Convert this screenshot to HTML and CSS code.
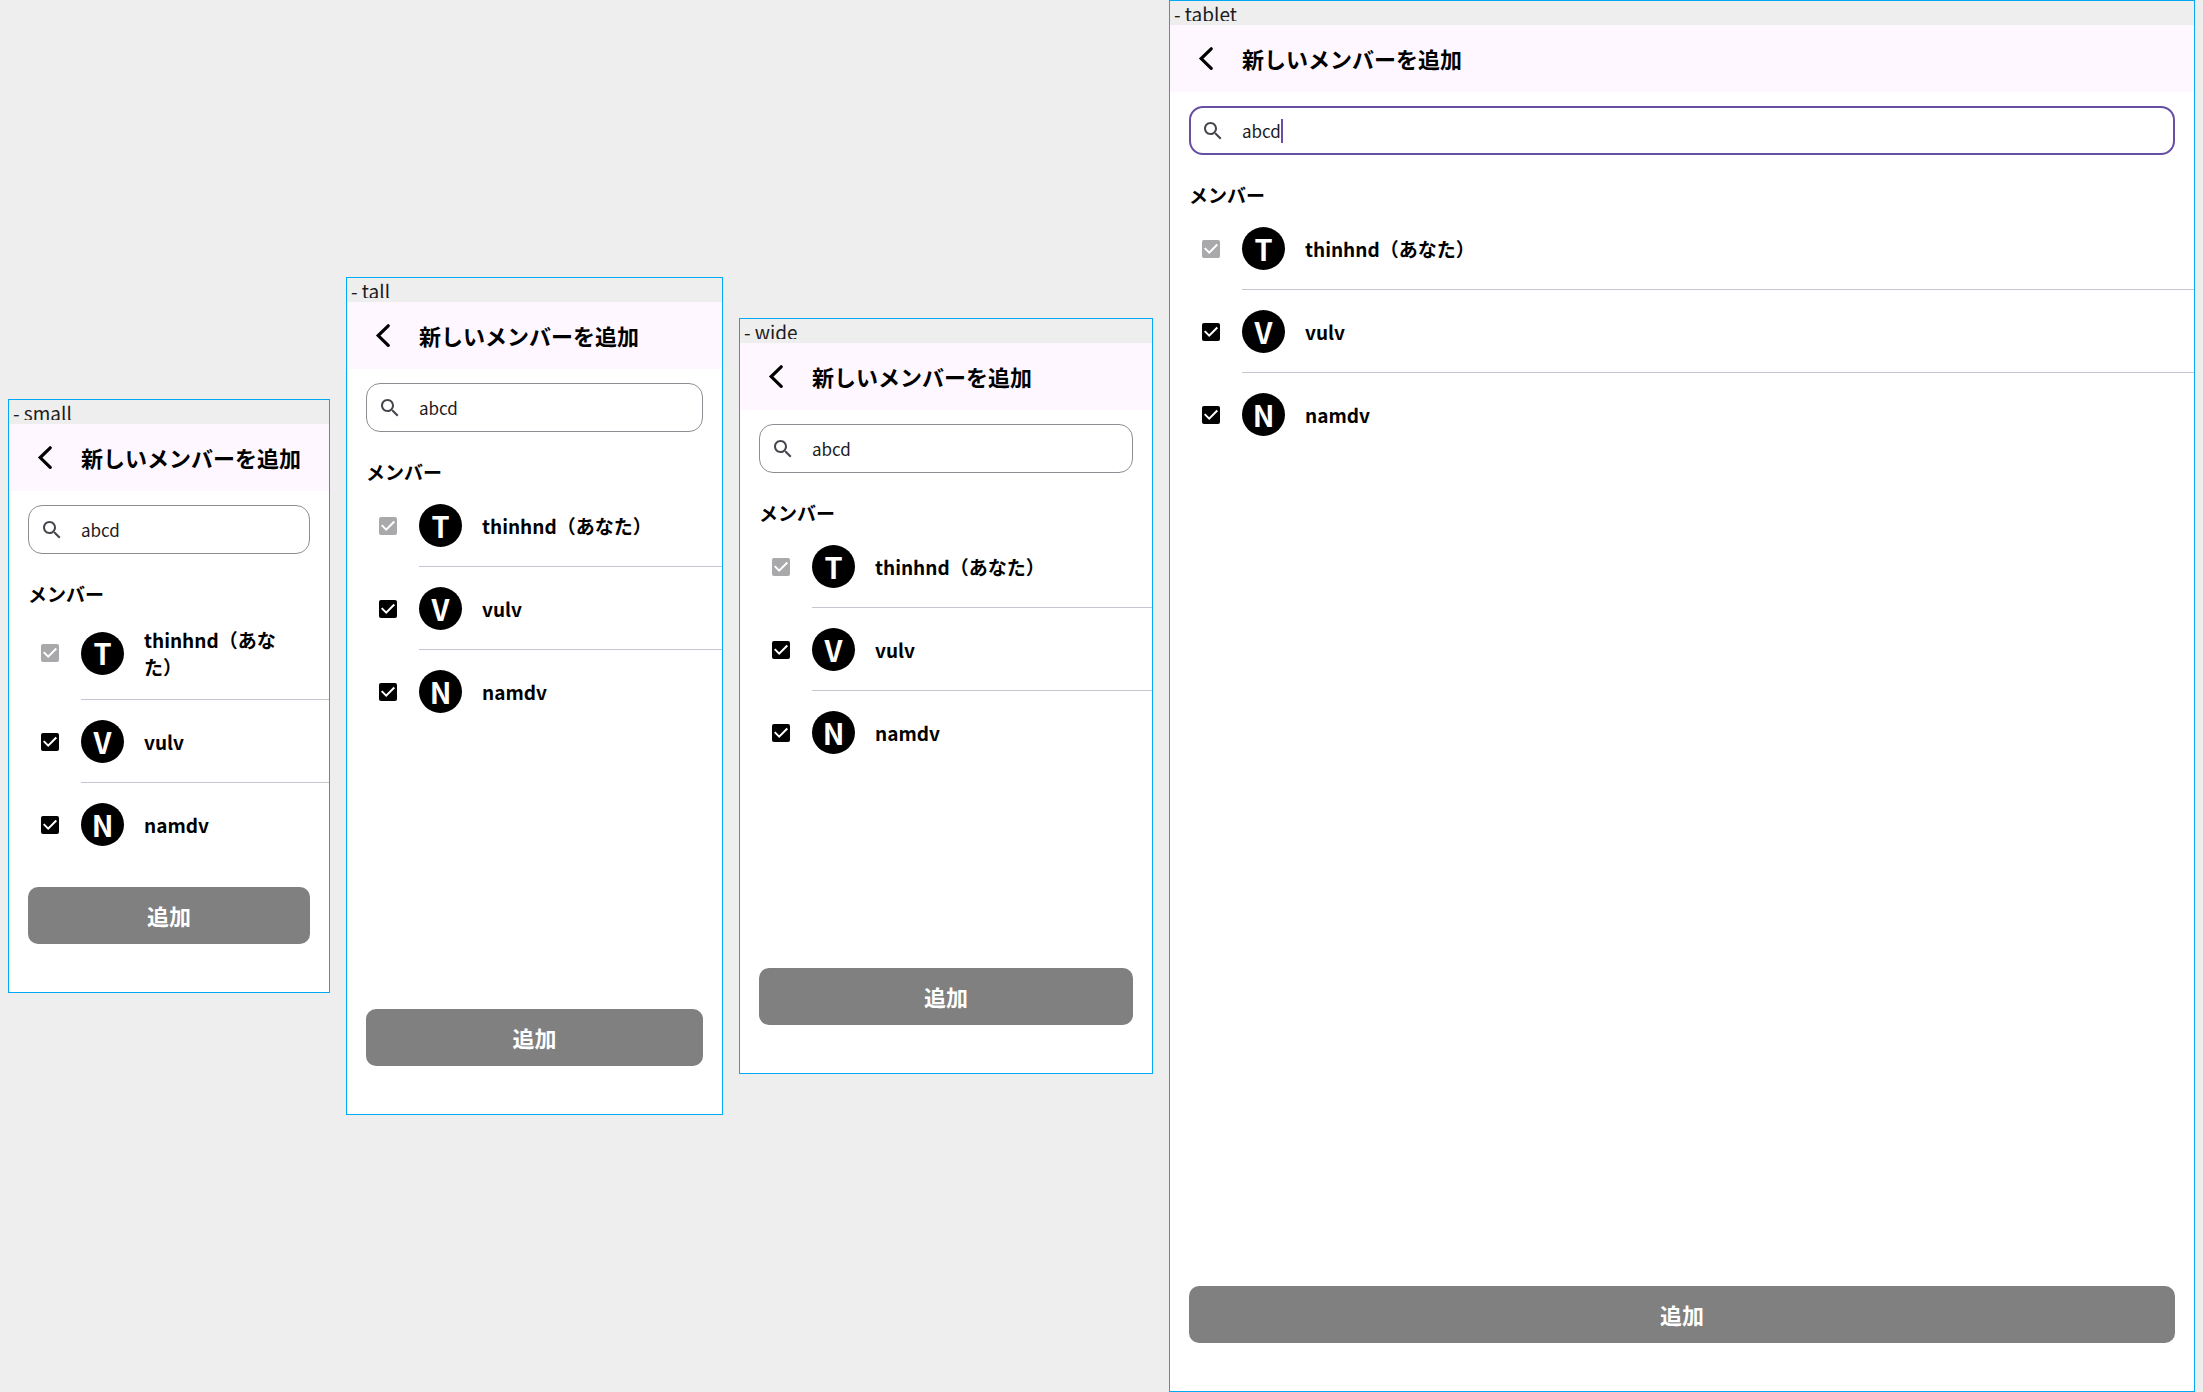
FILE: index.html
```html
<!DOCTYPE html>
<html lang="ja">
<head>
<meta charset="utf-8">
<meta name="viewport" content="width=device-width, initial-scale=1">
<title>新しいメンバーを追加</title>
<link rel="stylesheet" href="styles.css">
</head>
<body>
<svg class="sprite" aria-hidden="true">
  <symbol id="back" viewBox="0 0 24 24"><path d="M17.2 2.8 7.2 12.6l10 9.8" fill="none" stroke="currentColor" stroke-width="3.2" stroke-linecap="round"/></symbol>
  <symbol id="search" viewBox="0 0 24 24"><path fill="currentColor" d="M15.5 14h-.79l-.28-.27C15.41 12.59 16 11.11 16 9.5 16 5.91 13.09 3 9.5 3S3 5.91 3 9.5 5.91 16 9.5 16c1.61 0 3.09-.59 4.23-1.57l.27.28v.79l5 4.99L20.49 19l-4.99-5zm-6 0C7.01 14 5 11.99 5 9.5S7.01 5 9.5 5 14 7.01 14 9.5 11.99 14 9.5 14z"/></symbol>
</svg>
<main class="gallery">
  <section class="device device-small">
    <p class="device-label"><span class="device-name">- small</span></p>
    <header class="app-bar">
      <button class="back" type="button" aria-label="戻る"><svg class="back-icon"><use href="#back"/></svg></button>
      <h1 class="title">新しいメンバーを追加</h1>
    </header>
    <label class="search"><svg class="search-icon"><use href="#search"/></svg><input class="search-input" type="text" value="abcd" aria-label="検索"></label>
    <h2 class="section-title">メンバー</h2>
    <ul class="members">
      <li><label class="member"><input class="check" type="checkbox" checked disabled><span class="member-body"><span class="avatar">T</span><span class="name">thinhnd（あなた）</span></span></label></li>
      <li><label class="member"><input class="check" type="checkbox" checked><span class="member-body"><span class="avatar">V</span><span class="name">vulv</span></span></label></li>
      <li><label class="member"><input class="check" type="checkbox" checked><span class="member-body"><span class="avatar">N</span><span class="name">namdv</span></span></label></li>
    </ul>
    <button class="submit" type="button">追加</button>
  </section>

  <section class="device device-tall">
    <p class="device-label"><span class="device-name">- tall</span></p>
    <header class="app-bar">
      <button class="back" type="button" aria-label="戻る"><svg class="back-icon"><use href="#back"/></svg></button>
      <h1 class="title">新しいメンバーを追加</h1>
    </header>
    <label class="search"><svg class="search-icon"><use href="#search"/></svg><input class="search-input" type="text" value="abcd" aria-label="検索"></label>
    <h2 class="section-title">メンバー</h2>
    <ul class="members">
      <li><label class="member"><input class="check" type="checkbox" checked disabled><span class="member-body"><span class="avatar">T</span><span class="name">thinhnd（あなた）</span></span></label></li>
      <li><label class="member"><input class="check" type="checkbox" checked><span class="member-body"><span class="avatar">V</span><span class="name">vulv</span></span></label></li>
      <li><label class="member"><input class="check" type="checkbox" checked><span class="member-body"><span class="avatar">N</span><span class="name">namdv</span></span></label></li>
    </ul>
    <button class="submit" type="button">追加</button>
  </section>

  <section class="device device-wide">
    <p class="device-label"><span class="device-name">- wide</span></p>
    <header class="app-bar">
      <button class="back" type="button" aria-label="戻る"><svg class="back-icon"><use href="#back"/></svg></button>
      <h1 class="title">新しいメンバーを追加</h1>
    </header>
    <label class="search"><svg class="search-icon"><use href="#search"/></svg><input class="search-input" type="text" value="abcd" aria-label="検索"></label>
    <h2 class="section-title">メンバー</h2>
    <ul class="members">
      <li><label class="member"><input class="check" type="checkbox" checked disabled><span class="member-body"><span class="avatar">T</span><span class="name">thinhnd（あなた）</span></span></label></li>
      <li><label class="member"><input class="check" type="checkbox" checked><span class="member-body"><span class="avatar">V</span><span class="name">vulv</span></span></label></li>
      <li><label class="member"><input class="check" type="checkbox" checked><span class="member-body"><span class="avatar">N</span><span class="name">namdv</span></span></label></li>
    </ul>
    <button class="submit" type="button">追加</button>
  </section>

  <section class="device device-tablet">
    <p class="device-label"><span class="device-name">- tablet</span></p>
    <header class="app-bar">
      <button class="back" type="button" aria-label="戻る"><svg class="back-icon"><use href="#back"/></svg></button>
      <h1 class="title">新しいメンバーを追加</h1>
    </header>
    <label class="search search-focused"><svg class="search-icon"><use href="#search"/></svg><input class="search-input" type="text" value="abcd" aria-label="検索"><span class="caret"></span></label>
    <h2 class="section-title">メンバー</h2>
    <ul class="members">
      <li><label class="member"><input class="check" type="checkbox" checked disabled><span class="member-body"><span class="avatar">T</span><span class="name">thinhnd（あなた）</span></span></label></li>
      <li><label class="member"><input class="check" type="checkbox" checked><span class="member-body"><span class="avatar">V</span><span class="name">vulv</span></span></label></li>
      <li><label class="member"><input class="check" type="checkbox" checked><span class="member-body"><span class="avatar">N</span><span class="name">namdv</span></span></label></li>
    </ul>
    <button class="submit" type="button">追加</button>
  </section>
</main>
</body>
</html>
```
FILE: styles.css
```css
* {
  box-sizing: border-box;
}

body {
  margin: 0;
  background: #eee;
  color: #000;
  font-family: "Noto Sans CJK JP", sans-serif;
}

.sprite {
  display: none;
}

.gallery {
  display: flex;
  align-items: center;
  gap: 16px;
  min-height: 100vh;
  padding: 0 8px;
}

/* Device frames: each grows in proportion to its screen width */
.device {
  display: flex;
  flex-direction: column;
  min-width: 0;
  border: 1px solid #03a9f4;
  background: #fff;
}

.device-small {
  flex: 320 1 0;
  aspect-ratio: 322 / 594;
}

.device-tall {
  flex: 375 1 0;
  aspect-ratio: 377 / 838;
}

.device-wide {
  flex: 412 1 0;
  aspect-ratio: 414 / 756;
}

.device-tablet {
  flex: 1024 1 0;
  aspect-ratio: 1026 / 1392;
}

.device-label {
  margin: 0;
  padding: 4px;
  background: #eee;
  color: #1d1b20;
  font-size: 19px;
  line-height: 18px;
}

.device-name {
  display: block;
  height: 16px;
  overflow: hidden;
}

.app-bar {
  display: flex;
  align-items: center;
  height: 67px;
  padding-bottom: 2px;
  background: #fef7ff;
}

.back {
  display: grid;
  place-items: center;
  width: 72px;
  height: 64px;
  padding: 0;
  border: 0;
  background: none;
  color: inherit;
}

.back-icon {
  width: 24px;
  height: 24px;
}

.title {
  margin: 0;
  font-size: 22px;
  line-height: 32px;
  font-weight: 700;
  white-space: nowrap;
}

.search {
  display: flex;
  align-items: center;
  height: 49px;
  margin: 14px 19px 0;
  padding: 0 11px;
  border: 1px solid #8f8c94;
  border-radius: 14px;
}

.search-icon {
  flex: none;
  width: 24px;
  height: 24px;
  margin-right: 17px;
  color: #49454f;
}

.search-input {
  flex: 1;
  min-width: 0;
  padding: 1px 0 0;
  border: 0;
  outline: 0;
  background: none;
  color: #1d1b20;
  font: 17px/24px "Noto Sans CJK JP", sans-serif;
}

.search-focused {
  padding: 0 10px;
  border: 2px solid #6750a4;
}

.search-focused .search-input {
  flex: none;
  field-sizing: content;
}

.caret {
  width: 2px;
  height: 24px;
  background: #6750a4;
}

.section-title {
  margin: 28px 19px 0;
  font-size: 19px;
  line-height: 24px;
  font-weight: 700;
}

.members {
  flex: 1;
  margin: 0;
  padding: 0;
  list-style: none;
}

.member {
  display: flex;
  align-items: center;
  padding-left: 32px;
}

.check {
  appearance: none;
  flex: none;
  width: 18px;
  height: 18px;
  margin: 0 22px 0 0;
  border-radius: 2px;
  background: #000;
}

.check:checked {
  background-image: url("data:image/svg+xml,%3Csvg xmlns='http://www.w3.org/2000/svg' viewBox='0 0 18 18'%3E%3Cpath d='M2.7 8.1l4.5 4.5 8.1-8.1' fill='none' stroke='white' stroke-width='2'/%3E%3C/svg%3E");
}

.check:disabled {
  background-color: #a9a9ab;
}

.member-body {
  display: flex;
  flex: 1;
  align-items: center;
  gap: 20px;
  min-width: 0;
  padding: 20px 28px 19px 0;
  border-bottom: 1px solid #cac4d0;
}

li:last-child .member-body {
  border-bottom-color: transparent;
}

.avatar {
  display: grid;
  flex: none;
  place-items: center;
  width: 43px;
  height: 43px;
  padding-bottom: 2px;
  border-radius: 50%;
  background: #000;
  color: #fff;
  font-size: 29px;
  line-height: 40px;
  font-weight: 700;
}

.name {
  font-size: 19px;
  line-height: 27px;
  font-weight: 700;
}

.submit {
  flex: none;
  height: 57px;
  margin: 0 19px 48px;
  padding: 0 0 2px;
  border: 0;
  border-radius: 10px;
  background: #808080;
  color: #fff;
  font: 700 22px/32px "Noto Sans CJK JP", sans-serif;
}
```
